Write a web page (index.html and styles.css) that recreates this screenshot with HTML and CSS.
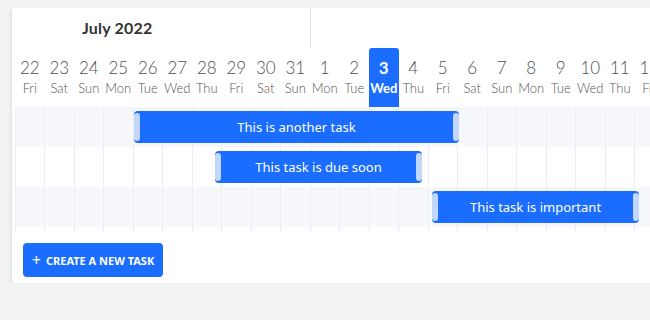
FILE: index.html
```html
<!DOCTYPE html>
<html lang="en">
<head>
  <meta charset="UTF-8" />
  <title>Task timeline</title>
  <link rel="stylesheet" href="styles.css">
</head>
<body>

  <div class="card">
    <div class="months">
      <div class="month">July 2022</div>
    </div>

    <div class="days">
      <div class="day"><span class="num">22</span><span class="name">Fri</span></div>
      <div class="day"><span class="num">23</span><span class="name">Sat</span></div>
      <div class="day"><span class="num">24</span><span class="name">Sun</span></div>
      <div class="day"><span class="num">25</span><span class="name">Mon</span></div>
      <div class="day"><span class="num">26</span><span class="name">Tue</span></div>
      <div class="day"><span class="num">27</span><span class="name">Wed</span></div>
      <div class="day"><span class="num">28</span><span class="name">Thu</span></div>
      <div class="day"><span class="num">29</span><span class="name">Fri</span></div>
      <div class="day"><span class="num">30</span><span class="name">Sat</span></div>
      <div class="day"><span class="num">31</span><span class="name">Sun</span></div>
      <div class="day"><span class="num">1</span><span class="name">Mon</span></div>
      <div class="day"><span class="num">2</span><span class="name">Tue</span></div>
      <div class="day today"><span class="num">3</span><span class="name">Wed</span></div>
      <div class="day"><span class="num">4</span><span class="name">Thu</span></div>
      <div class="day"><span class="num">5</span><span class="name">Fri</span></div>
      <div class="day"><span class="num">6</span><span class="name">Sat</span></div>
      <div class="day"><span class="num">7</span><span class="name">Sun</span></div>
      <div class="day"><span class="num">8</span><span class="name">Mon</span></div>
      <div class="day"><span class="num">9</span><span class="name">Tue</span></div>
      <div class="day"><span class="num">10</span><span class="name">Wed</span></div>
      <div class="day"><span class="num">11</span><span class="name">Thu</span></div>
      <div class="day"><span class="num">12</span><span class="name">Fri</span></div>
    </div>

    <div class="rows">
      <div class="row">
        <div class="task" style="margin-left: 119px; width: 325px;">This is another task</div>
      </div>
      <div class="row">
        <div class="task" style="margin-left: 200px; width: 207px;">This task is due soon</div>
      </div>
      <div class="row">
        <div class="task" style="margin-left: 417px; width: 207px;">This task is important</div>
      </div>
    </div>

    <div class="footer">
      <button class="new-task"><span class="plus">+</span>Create a new task</button>
    </div>
  </div>

</body>
</html>
```

FILE: styles.css
```css
body {
  background-color: #f2f3f5;
  margin: 0;
  padding: 8px 0 0 12px;
  overflow: hidden;
  font-family: 'Lato', sans-serif;
}

.card {
  background-color: #fff;
  width: 700px;
  border-radius: 3px 0 0 3px;
  box-shadow: 0 2px 4px rgba(0,0,0,0.14);
  padding-left: 3px;
}

.months {
  display: flex;
  height: 40px;
}

.month {
  width: 228px;
  padding-left: 67px;
  border-right: 1px solid #e2e2e6;
  font-size: 16px;
  font-weight: bold;
  color: #333;
  line-height: 40px;
  letter-spacing: 0.2px;
}

.days {
  display: grid;
  grid-template-columns: repeat(22, 29.5px);
  height: 59px;
}

.day {
  display: flex;
  flex-direction: column;
  align-items: center;
  padding-top: 10px;
  color: #505050;
  font-weight: 300;
  border-radius: 3px 3px 0 0;
}

.num {
  font-size: 17px;
  line-height: 20px;
}

.name {
  font-size: 13px;
  line-height: 21px;
  color: #555;
}

.today {
  background-color: #1a6dff;
  color: #fff;
  font-weight: bold;
}

.today .name {
  color: #fff;
}

.rows {
  background-image: repeating-linear-gradient(to right, #ececf0 0 1px, transparent 1px 29.5px);
  padding-bottom: 5px;
}

.row {
  height: 40px;
  display: flex;
  align-items: center;
}

.row:nth-child(odd) {
  background-color: rgba(240, 241, 248, 0.6);
}

.task {
  height: 32px;
  box-sizing: border-box;
  background-color: #1a6dff;
  border-radius: 4px;
  color: #fff;
  font-family: 'Noto Sans', sans-serif;
  font-size: 13px;
  display: flex;
  align-items: center;
  justify-content: center;
  position: relative;
}

.task::before,
.task::after {
  content: '';
  position: absolute;
  top: 2px;
  bottom: 2px;
  width: 6px;
  background-color: #c3d7fb;
  border-radius: 3px;
}

.task::before {
  left: 0;
}

.task::after {
  right: 0;
}

.footer {
  background-color: #fff;
  padding: 11px 0 6px 8px;
}

.new-task {
  height: 34px;
  width: 140px;
  border: none;
  border-radius: 4px;
  background-color: #1a6dff;
  color: #fff;
  font-family: 'Noto Sans', sans-serif;
  font-size: 11px;
  font-weight: bold;
  text-transform: uppercase;
  padding: 0;
  cursor: pointer;
  display: flex;
  align-items: center;
  justify-content: center;
}

.plus {
  font-size: 16px;
  font-weight: normal;
  margin-right: 5px;
}
```
